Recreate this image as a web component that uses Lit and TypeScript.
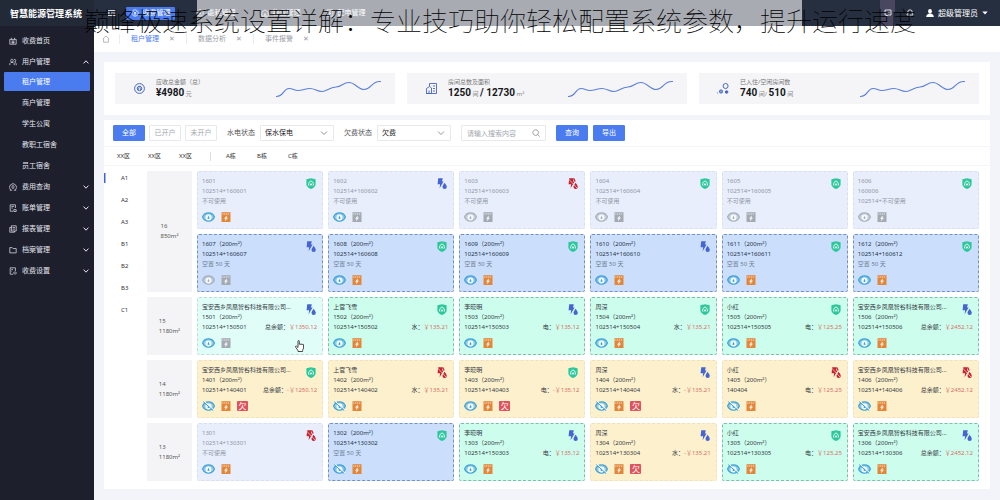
import { LitElement, html, css, svg, nothing } from "lit";
import { customElement, property, state } from "lit/decorators.js";
import { classMap } from "lit/directives/class-map.js";

type Tone = "off" | "empty" | "mint" | "pale" | "sand";
type Status = "shield" | "supply" | "cut";
interface Room {
  tone: Tone;
  status: Status;
  lines: string[];
  fee?: string;
  amount?: string;
  eye: "on" | "off" | "grey";
  meter: "orange" | "grey";
  owed?: boolean;
}
interface Floor {
  no: string;
  area: string;
  rooms: Room[];
}

const FIRM = "宝安西乡凤凰智谷科技有限公司...";

const off = (lines: string[], status: Status, eye: Room["eye"], meter: Room["meter"]): Room => ({
  tone: "off", status, eye, meter, lines,
});
const empty = (no: string, code: string, status: Status, eye: Room["eye"] = "on", meter: Room["meter"] = "orange"): Room => ({
  tone: "empty", status, eye, meter, lines: [`${no}（200m²）`, `102514+${code}`, "空置 50 天"],
});
const rented = (
  tone: Tone, name: string, no: string, code: string, fee: string, amount: string, status: Status,
  eye: Room["eye"] = "on", owed = false, meter: Room["meter"] = "orange",
): Room => ({ tone, status, eye, meter, owed, fee, amount, lines: [name, `${no}（200m²）`, code] });

const FLOORS: Floor[] = [
  {
    no: "16", area: "850m²",
    rooms: [
      off(["1601", "102514+160601", "不可使用"], "shield", "on", "orange"),
      off(["1602", "102514+160602", "不可使用"], "supply", "on", "grey"),
      off(["1603", "102514+160603", "不可使用"], "cut", "grey", "grey"),
      off(["1604", "102514+160604", "不可使用"], "shield", "grey", "grey"),
      off(["1605", "102514+160605", "不可使用"], "shield", "grey", "grey"),
      off(["1606", "160606", "102514+不可使用"], "shield", "grey", "grey"),
      empty("1607", "160607", "supply", "grey", "grey"),
      empty("1608", "160608", "shield"),
      empty("1609", "160609", "shield"),
      empty("1610", "160610", "supply"),
      empty("1611", "160611", "shield"),
      empty("1612", "160612", "shield"),
    ],
  },
  {
    no: "15", area: "1180m²",
    rooms: [
      rented("pale", FIRM, "1501", "102514+150501", "总余额", "￥1350.12", "supply", "on", false, "grey"),
      rented("mint", "上官飞雪", "1502", "102514+150502", "水", "￥135.21", "shield"),
      rented("mint", "李晓明", "1503", "102514+150503", "电", "￥135.12", "supply"),
      rented("mint", "周深", "1504", "102514+150504", "水", "￥135.21", "shield"),
      rented("mint", "小红", "1505", "102514+150505", "电", "￥125.25", "shield"),
      rented("mint", FIRM, "1506", "102514+150506", "总余额", "￥2452.12", "supply"),
    ],
  },
  {
    no: "14", area: "1180m²",
    rooms: [
      rented("sand", FIRM, "1401", "102514+140401", "总余额", "-￥1250.12", "shield", "off", true),
      rented("sand", "上官飞雪", "1402", "102514+140402", "水", "￥135.21", "cut", "off"),
      rented("sand", "李晓明", "1403", "102514+140403", "电", "-￥135.12", "shield", "on", true),
      rented("sand", "周深", "1404", "102514+140404", "水", "-￥135.21", "supply", "off", true),
      rented("sand", "小红", "1405", "140404", "电", "￥125.25", "cut", "off"),
      rented("sand", FIRM, "1406", "102514+140406", "总余额", "￥2452.12", "cut", "off"),
    ],
  },
  {
    no: "13", area: "1180m²",
    rooms: [
      off(["1301", "102514+130301", "不可使用"], "cut", "on", "orange"),
      empty("1302", "130302", "shield", "off"),
      rented("mint", "李晓明", "1303", "102514+150303", "电", "￥135.12", "supply"),
      rented("sand", "周深", "1304", "102514+130304", "水", "-￥135.21", "supply", "off", true),
      rented("mint", "小红", "1305", "102514+130305", "电", "￥125.25", "shield", "off"),
      rented("mint", FIRM, "1306", "102514+130306", "总余额", "￥2452.12", "supply", "off"),
    ],
  },
];

const statusIcon = (s: Status) => {
  if (s === "shield")
    return html`<svg class="status" viewBox="0 0 10 11" role="img" aria-label="正常">
      <path d="M5 .2 9.6 1.3V6.2C9.6 8.6 7.6 9.9 5 10.9 2.4 9.9.4 8.6.4 6.2V1.3Z" fill="#2cc79b" />
      <path d="M2.5 7.4C2.5 4.6 4 3 5 3S7.5 4.6 7.5 7.4M4 7.6 5 5.6 6 7.6" fill="none" stroke="#e8fff6" stroke-width="1" />
    </svg>`;
  const c = s === "cut" ? "#c4232f" : "#4665d2";
  return html`<svg class="status" viewBox="0 0 10 11" role="img" aria-label=${s === "cut" ? "断水断电" : "水电正常"}>
    <path d="M1.2.3H5.8L5 3.4H6.6L2.6 10.2 3.1 6.2H.6Z" fill=${c} />
    <path d="M7.6 4.8C8.8 6.6 9.8 7.7 9.8 8.9A2.1 2 0 0 1 5.5 8.9C5.5 7.7 6.5 6.6 7.6 4.8Z" fill=${c} />
    ${s === "cut" ? svg`<path d="M.6 1 9.4 10.4" stroke="#f6e6e4" stroke-width=".7"/><path d="M5.8.6 7.2 3.4" stroke=${c} stroke-width="1.2"/>` : nothing}
  </svg>`;
};

const eyeIcon = (e: Room["eye"]) => {
  const c = e === "grey" ? "#a9afb9" : "#3fa2da";
  return html`<svg class="eye" viewBox="0 0 13 10" role="img" aria-label="查看">
    <path d="M.6 5C1.6 2.4 3.8 .9 6.5 .9S11.4 2.4 12.4 5C11.4 7.6 9.2 9.1 6.5 9.1S1.6 7.6.6 5Z" fill=${c} fill-opacity=".5" stroke=${c} stroke-width="1.2" />
    <circle cx="6.5" cy="5.4" r="3" fill="#f3fbff" />
    <path d="M6.5 3.8 7.5 6A1 1 0 1 1 5.5 6Z" fill=${c} />
    ${e === "off" ? svg`<path d="M2.2.4 12 9.2" stroke="#fff" stroke-width="1"/><path d="M1.2.6 11.4 9.8" stroke=${c} stroke-width="1"/>` : nothing}
  </svg>`;
};

const meterIcon = (m: Room["meter"]) => {
  const c = m === "grey" ? "#a4a9b2" : "#e2863a";
  return html`<svg class="meter" viewBox="0 0 10 10" role="img" aria-label="电表">
    <path d="M.5.2H9.5V10H.5Z" fill=${c} />
    <path d="M1.2 2H8.8" stroke="#fff" stroke-opacity=".75" stroke-width="1" stroke-dasharray="1.3 .6" />
    <path d="M5.6 3.8 3.4 6.6H4.7L4.3 8.8 6.7 5.8H5.3Z" fill="#fff" stroke="#fff" stroke-width=".3" fill-opacity=".9" />
  </svg>`;
};

@customElement("room-card")
class RoomCard extends LitElement {
  @property({ attribute: false }) room!: Room;

  static styles = css`
    :host { display: block; min-width: 0; }
    .card {
      box-sizing: border-box; height: 58px; padding: 4px 5px 4px 4px; position: relative;
      border: 1px dashed; border-radius: 2px; font-size: 6px; line-height: 10px; color: #333a45;
    }
    .off { background: #e9eefd; border-color: #d9dff2; color: #8f96a5; }
    .empty { background: #cbdffd; border-color: #7492ba; color: #263245; }
    .mint { background: #cdfdec; border-color: #7cbfab; }
    .pale { background: #e0fef7; border-color: #bfdcd6; }
    .sand { background: #fdf0cc; border-color: #efe2bd; }
    p { margin: 0; white-space: nowrap; }
    .row { display: flex; justify-content: space-between; }
    .muted { color: #6f7c92; }
    .amount { color: #d8706a; }
    .status { position: absolute; top: 6px; right: 6px; width: 10px; height: 11px; }
    .icons { display: flex; align-items: center; gap: 6px; margin-top: 6px; height: 10px; }
    .eye { width: 13px; height: 10px; }
    .meter { width: 10px; height: 10px; }
    .owed {
      width: 11px; height: 10px; border-radius: 1px; background: #e0525c; color: #fff;
      font-size: 8px; text-align: center;
    }
  `;

  render() {
    const r = this.room;
    return html`<article class="card ${r.tone}">
      <p>${r.lines[0]}</p>
      <p>${r.lines[1]}</p>
      <p class="row">
        <span class=${classMap({ muted: r.tone === "empty" })}>${r.lines[2]}</span>
        ${r.amount ? html`<span>${r.fee}：<span class="amount">${r.amount}</span></span>` : nothing}
      </p>
      ${statusIcon(r.status)}
      <div class="icons">
        ${eyeIcon(r.eye)}${meterIcon(r.meter)}
        ${r.owed ? html`<span class="owed">欠</span>` : nothing}
      </div>
    </article>`;
  }
}

const line = (d: string) => html`<svg class="ico" viewBox="0 0 10 10" aria-hidden="true">
  <path d=${d} fill="none" stroke="currentColor" stroke-width=".9" />
</svg>`;

const ICONS = {
  home: "M1 3H9V9H1ZM3 1V3M7 1V3M3 5H7M5 5V9M3 7H7",
  users: "M1 9V7L2.5 5.5H5L6.5 7V9M3.6 1.5A1.6 1.8 0 1 0 3.7 1.5M6.4 1.6A1.6 1.7 0 0 1 7 5L9 6.8V9",
  query: "M2 8.6A4.4 4.4 0 1 1 8 8.6M1 9H4M6 9H9M5 2.8 6.6 5 5 7.2 3.4 5Z",
  bill: "M5 9H1.5V1H8V5M3 3H6.4M3 5H5M6 7H9V9.4H6Z",
  report: "M3 1H9V7.5H3ZM3 3H1V9H7V7.5M4.5 3.2H7.5M4.5 5.2H7.5",
  folder: "M1 2H4L5 3.2H9V8.6H1Z",
  gear: "M5 9H1.5V1H8V5M3 3H5M3 5H4M7.4 6A1.5 1.5 0 1 0 7.5 6",
};

const MENU: { label: string; icon: string; arrow?: "up" | "down"; children?: string[] }[] = [
  { label: "收费首页", icon: ICONS.home },
  { label: "用户管理", icon: ICONS.users, arrow: "up", children: ["租户管理", "商户管理", "学生公寓", "教职工宿舍", "员工宿舍"] },
  { label: "费用查询", icon: ICONS.query, arrow: "down" },
  { label: "账单管理", icon: ICONS.bill, arrow: "down" },
  { label: "报表管理", icon: ICONS.report, arrow: "down" },
  { label: "档案管理", icon: ICONS.folder, arrow: "down" },
  { label: "收费设置", icon: ICONS.gear, arrow: "down" },
];

@customElement("app-root")
class AppRoot extends LitElement {
  @state() private building = "A1";

  static styles = css`
    :host {
      display: block; min-height: 100vh; position: relative; background: #f3f3fa; color: #333;
      font-family: "Noto Sans", "Noto Sans CJK SC", sans-serif; font-size: 7px; line-height: 10px;
    }
    * { box-sizing: border-box; }
    a { color: inherit; text-decoration: none; }
    button, input, select { font: inherit; color: inherit; margin: 0; }
    svg { display: block; }
    .ico { width: 8px; height: 8px; flex: none; }

    .page { min-height: 100vh; display: flex; flex-direction: column; }
    .header { height: 26px; display: flex; align-items: center; background: #262f3f; color: #fff; position: relative; }
    .brand { width: 94px; height: 26px; padding-left: 10px; line-height: 27px; background: #222937; font-size: 9px; font-weight: 700; white-space: nowrap; }
    .band { position: absolute; inset: 0 198px 0 197px; background: #fff; opacity: .6; }
    .topnav { flex: 1; display: flex; align-items: center; gap: 16px; padding-left: 14px; position: relative; white-space: nowrap; }
    .topnav a { display: flex; align-items: center; justify-content: center; gap: 4px; width: 49px; height: 13px; border-radius: 1px; }
    .topnav .current { background: #4a7cf0; }
    .burger { width: 8px; height: 8px; margin-right: -6px; }
    .tools { display: flex; align-items: center; height: 26px; padding-right: 12px; font-size: 8px; position: relative; }
    .tool { width: 15px; height: 26px; margin-right: 7px; padding: 0; border: 0; background: none; display: grid; place-items: center; }
    .tool.lit { background: #48475f; }
    .user { display: flex; align-items: center; gap: 4px; padding: 0; border: 0; background: none; margin-left: 2px; }
    .caret { width: 6px; height: 4px; }

    .shell { flex: 1; display: flex; }
    .side { width: 94px; flex: none; background: #1e1f2d; color: #e4e6ee; padding: 4px 4px 0; }
    .item { height: 21px; display: flex; align-items: center; gap: 5px; padding: 0 1px 0 5px; }
    .item .name { flex: 1; }
    .arrow { width: 6px; height: 4px; }
    .children { display: grid; gap: 2px; padding-bottom: 1px; }
    .sub { height: 19px; padding-left: 18px; display: flex; align-items: center; border-radius: 1px; }
    .sub.current { background: #4a7cf0; color: #fff; }

    .main { flex: 1; min-width: 0; padding-bottom: 11px; }
    .tabs { height: 26px; background: #fff; display: flex; align-items: center; padding-left: 8px; color: #9a9da6; }
    .tabs .home { width: 17px; }
    .tab { width: 67px; border-left: 1px solid #ececf2; padding-left: 11px; display: flex; gap: 10px; }
    .tab.current a { color: #4a7cf0; }
    .tab button { border: 0; background: none; padding: 0; }

    .panel { background: #fff; margin: 0 10px; }
    .stats { margin-top: 10px; padding: 11px; display: grid; grid-template-columns: repeat(3, 1fr); gap: 12px; }
    .stat { height: 31px; background: #f5f5f7; display: flex; align-items: center; padding: 0 14px 0 18px; }
    .stat .pic { width: 13px; height: 13px; margin-right: 10px; }
    .stat .txt { flex: 1; white-space: nowrap; }
    .cap { font-size: 6px; color: #777; }
    .val { font-size: 6px; color: #888; line-height: 12px; }
    .val b { font: 700 10px/12px Roboto, sans-serif; color: #15171c; }
    .spark { width: 105px; height: 18px; }

    .list { margin-top: 5px; padding-bottom: 8px; }
    .filters { display: flex; align-items: center; padding: 5px 9px; height: 27px; border-bottom: 1px solid #f6f6f9; white-space: nowrap; }
    .btn { width: 32px; height: 16px; padding: 0; border-radius: 1px; border: 1px solid #e6e8ee; background: #fff; color: #a5a8b0; margin-right: 4px; }
    .btn.primary { background: #4a7cf0; border-color: #4a7cf0; color: #fff; }
    .actions { display: flex; gap: 1px; }
    .field { display: flex; align-items: center; gap: 5px; margin: 0 4px 0 6px; color: #555; }
    .box { position: relative; display: block; }
    .box select, .box input { height: 16px; border: 1px solid #e6e8ee; border-radius: 1px; background: #fff; padding: 0 4px; appearance: none; outline: 0; display: block; }
    .box select { width: 74px; color: #222; }
    .box input { width: 85px; padding: 0 5px; }
    .box input::placeholder { color: #a3a6ae; opacity: 1; }
    .box svg { position: absolute; right: 6px; top: 4px; width: 8px; height: 8px; color: #888; }
    .search { margin: 0 10px 0 6px; }
    .zones { display: flex; align-items: center; height: 19px; padding-left: 13px; border-bottom: 1px solid #f6f6f9; font-size: 6px; gap: 16px; }
    .zones a { width: 15px; }
    .zones .bar { width: 1px; height: 9px; background: #dcdde3; margin-right: -1px; }

    .body { display: flex; padding: 5px 11px 0 0; }
    .buildings { width: 43px; flex: none; display: flex; flex-direction: column; gap: 12px; padding-top: 2px; }
    .buildings button { height: 10px; text-align: left; border: 0; background: none; padding: 0 0 0 16px; border-left: 1px solid transparent; font-size: 6px; }
    .buildings .on { border-left-color: #3c62d8; box-shadow: inset 1px 0 0 #9db4f3; }
    .floors { flex: 1; min-width: 0; display: flex; flex-direction: column; gap: 5px; }
    .floor { display: flex; gap: 5px; }
    .tag { width: 45px; flex: none; background: #f4f4f6; display: grid; place-content: center; font-size: 6px; color: #555; padding-bottom: 1px; }
    .rooms { flex: 1; display: grid; grid-template-columns: repeat(6, minmax(0, 1fr)); gap: 5px; }

    .headline {
      position: absolute; top: 0; left: 0; right: 0; margin: 0; text-align: center; pointer-events: none;
      font: 100 26px/40px "Noto Sans CJK SC", sans-serif; color: #000; white-space: nowrap;
    }
    .pointer { position: absolute; left: 295px; top: 340px; width: 9px; height: 12px; }
  `;

  private arrow(dir: "up" | "down") {
    return html`<svg class="arrow" viewBox="0 0 6 4" aria-hidden="true">
      <path d=${dir === "up" ? "M.6 3.4 3 .8 5.4 3.4" : "M.6.6 3 3.2 5.4.6"} fill="none" stroke="currentColor" stroke-width="1" />
    </svg>`;
  }

  private select(id: string, label: string, value: string) {
    return html`<div class="field">
      <label for=${id}>${label}</label>
      <span class="box">
        <select id=${id}><option>${value}</option></select>
        <svg viewBox="0 0 8 8" aria-hidden="true"><path d="M1 2.5 4 5.5 7 2.5" fill="none" stroke="currentColor" stroke-width=".9" /></svg>
      </span>
    </div>`;
  }

  private stat(pic: unknown, cap: string, value: unknown) {
    return html`<div class="stat">
      <svg class="pic" viewBox="0 0 13 13" fill="none" stroke="#4568c4" aria-hidden="true">${pic}</svg>
      <div class="txt"><div class="cap">${cap}</div><div class="val">${value}</div></div>
      <svg class="spark" viewBox="0 0 105 18" fill="none" aria-hidden="true">
        <path d="M0 16.5C8 17 7 8.5 13 8.5 17 8.5 18 10.5 22 10.5 27 10.5 29 8.5 34 8.5 39 8.5 41 11.5 46 11.5 51 11.5 53 7.5 60 7 66 6.5 67 2.5 73 2.5 79 2.5 82 9.5 88 9.5 96 9.5 95 .5 105 1.5" stroke="#5b80d6" stroke-width="1.1" />
      </svg>
    </div>`;
  }

  render() {
    return html`
      <div class="page">
        <header class="header">
          <div class="brand">智慧能源管理系统</div>
          <div class="band"></div>
          <nav class="topnav">
            <svg class="burger" viewBox="0 0 8 8" aria-hidden="true"><path d="M0 1.5H8M3 4H8M0 6.5H8M0 3 1.6 4 0 5" fill="none" stroke="#fff" stroke-width=".8" /></svg>
            <a class="current" href="#">${line("M5 1A4 4 0 1 0 5.1 1M3 3 5 5 7 3M5 5V8M3.4 6H6.6")}收费管理</a>
            <a href="#">${line("M5 1A4 4 0 1 0 5.1 1M5.6 2.6 4 5.4H6L4.4 7.6")}能耗管理</a>
            <a href="#">${line("M1 9V4L5 1 9 4V9ZM4 9V6H6V9")}物业管理</a>
            <a href="#">${line("M1.5 1H8.5V9H1.5ZM5.6 2.6 4 5.4H6L4.4 7.6")}配电管理</a>
          </nav>
          <div class="tools">
            <button class="tool lit" aria-label="消息">
              <svg width="8" height="8" viewBox="0 0 8 8"><path d="M1 1H7V6H4L2.5 7.4V6H1ZM2.5 3.5H5.5" fill="none" stroke="#fff" stroke-width=".8" /></svg>
            </button>
            <button class="tool" aria-label="通知">
              <svg width="8" height="8" viewBox="0 0 8 8"><path d="M1 6V5.4L1.8 4.6V3A2.2 2.2 0 0 1 6.2 3V4.6L7 5.4V6ZM3 7.3H5" fill="none" stroke="#fff" stroke-width=".8" /></svg>
            </button>
            <button class="user">
              <svg width="8" height="8" viewBox="0 0 8 8" fill="#fff" aria-hidden="true"><ellipse cx="4" cy="2.3" rx="1.9" ry="2.2" /><path d="M.2 8C.2 5.6 2 5.4 3 4.6H5C6 5.4 7.8 5.6 7.8 8Z" /></svg>
              超级管理员
              <svg class="caret" viewBox="0 0 6 4" aria-hidden="true"><path d="M.3.4H5.7L3 3.6Z" fill="#fff" /></svg>
            </button>
          </div>
        </header>

        <div class="shell">
          <nav class="side">
            ${MENU.map(
              (m) => html`
                <a class="item" href="#">${line(m.icon)}<span class="name">${m.label}</span>${m.arrow ? this.arrow(m.arrow) : nothing}</a>
                ${m.children
                  ? html`<div class="children">
                      ${m.children.map((c, i) => html`<a class=${classMap({ sub: true, current: i === 0 })} href="#">${c}</a>`)}
                    </div>`
                  : nothing}
              `,
            )}
          </nav>

          <main class="main">
            <div class="tabs">
              <a class="home" href="#" aria-label="首页">${line("M1 5 5 1.2 9 5M2 4.4V9H8V4.4")}</a>
              ${["租户管理", "数据分析", "事件报警"].map(
                (t, i) => html`<div class=${classMap({ tab: true, current: i === 0 })}><a href="#">${t}</a><button aria-label="关闭${t}">✕</button></div>`,
              )}
            </div>

            <section class="panel stats">
              ${this.stat(
                svg`<circle cx="6.5" cy="6.5" r="4.9"/><circle cx="6.5" cy="6.5" r="2.2" fill="#7d97dc"/><path d="M5.4 5.2 6.5 6.6 7.6 5.2M6.5 6.6V8.4" stroke="#fff" stroke-width=".7"/>`,
                "应收总金额（总）", html`<b>¥4980</b> 元`)}
              ${this.stat(
                svg`<path d="M1.5 11.5V6.5L4.5 4.5 6.5 6V11.5ZM4.5 4.5V1.5H11.5V11.5H1M8 4H10M8 6.5H10M8 9H10M4 8.5V11" stroke-width=".9"/>`,
                "房间总数及面积", html`<b>1250</b> 间 <b>/ 12730</b> m²`)}
              ${this.stat(
                svg`<circle cx="8.6" cy="4" r="2.5"/><circle cx="4" cy="9.5" r="1.6" fill="#8ba2df"/><circle cx="9.6" cy="10" r="1.3" fill="#4568c4"/><path d="M.5 10.5V11.5" stroke-width=".8"/>`,
                "已入住/空闲房间数", html`<b>740</b> 间/ <b>510</b> 间`)}
            </section>

            <section class="panel list">
              <div class="filters">
                <button class="btn primary">全部</button>
                <button class="btn">已开户</button>
                <button class="btn">未开户</button>
                ${this.select("supply", "水电状态", "保水保电")}
                ${this.select("debt", "欠费状态", "欠费")}
                <span class="box search">
                  <input type="text" aria-label="搜索" placeholder="请输入搜索内容" />
                  <svg viewBox="0 0 8 8" aria-hidden="true"><path d="M3.6.8A2.8 2.8 0 1 0 3.7.8M5.6 5.6 7.6 7.6" fill="none" stroke="currentColor" stroke-width=".8" /></svg>
                </span>
                <div class="actions">
                  <button class="btn primary">查询</button>
                  <button class="btn primary">导出</button>
                </div>
              </div>
              <nav class="zones">
                <a href="#">XX区</a><a href="#">XX区</a><a href="#">XX区</a>
                <span class="bar"></span>
                <a href="#">A栋</a><a href="#">B栋</a><a href="#">C栋</a>
              </nav>
              <div class="body">
                <div class="buildings">
                  ${["A1", "A2", "A3", "B1", "B2", "B3", "C1"].map(
                    (b) => html`<button class=${classMap({ on: b === this.building })} @click=${() => (this.building = b)}>${b}</button>`,
                  )}
                </div>
                <div class="floors">
                  ${FLOORS.map(
                    (f) => html`<div class="floor">
                      <div class="tag"><span>${f.no}</span><span>${f.area}</span></div>
                      <div class="rooms">${f.rooms.map((r) => html`<room-card .room=${r}></room-card>`)}</div>
                    </div>`,
                  )}
                </div>
              </div>
            </section>
          </main>
        </div>
      </div>
      <h1 class="headline">巅峰极速系统设置详解：专业技巧助你轻松配置系统参数，提升运行速度</h1>
      <svg class="pointer" viewBox="0 0 9 12" aria-hidden="true">
        <path d="M3 7.5 1.6 6.2C.6 5.4.2 6.6.8 7.4L3 10.6V11.5H7.6V10.4L8.5 8V4.8C8.5 4 7.3 4 7.2 4.8 7.2 3.8 5.9 3.8 5.8 4.6 5.8 3.6 4.4 3.6 4.3 4.4V1.2C4.3.2 3 .2 3 1.2Z" fill="#fff" stroke="#222" stroke-width=".8" />
      </svg>
    `;
  }
}
